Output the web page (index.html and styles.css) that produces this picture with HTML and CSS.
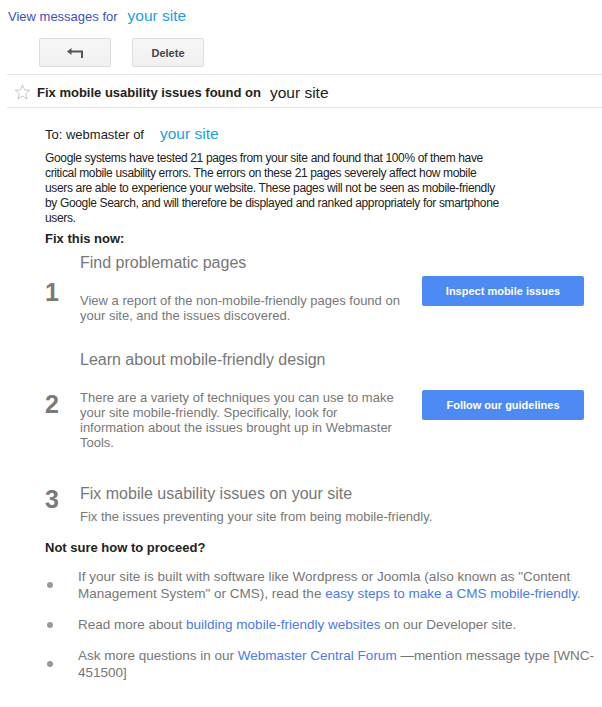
FILE: index.html
```html
<!DOCTYPE html>
<html>
<head>
<meta charset="utf-8">
<link rel="stylesheet" href="styles.css">
</head>
<body>
<div class="topbar">
  <a class="view-link" href="#">View messages for</a>
  <span class="site">your site</span>
</div>
<div class="toolbar">
  <button class="tbtn" aria-label="Back">
    <svg width="16" height="10" viewBox="0 0 16 10"><path d="M0 3.5 L4.5 0 V2.5 H16 V10 H14 V4.5 H4.5 V7 Z" fill="#555"/></svg>
  </button>
  <button class="tbtn">Delete</button>
</div>
<div class="subject">
  <svg class="star" width="17" height="16" viewBox="0 0 17 16"><path d="M8.5 0.8 L10.5 6 L16 6.2 L11.7 9.6 L13.2 15 L8.5 11.9 L3.8 15 L5.3 9.6 L1 6.2 L6.5 6 Z" fill="none" stroke="#c8c8c8" stroke-width="1"/></svg>
  <span class="subj-text">Fix mobile usability issues found on</span>
  <span class="subj-site">your site</span>
</div>
<div class="message">
  <div class="to"><span>To: webmaster of</span><span class="site">your site</span></div>
  <p class="intro">Google systems have tested 21 pages from your site and found that 100% of them have critical mobile usability errors. The errors on these 21 pages severely affect how mobile users are able to experience your website. These pages will not be seen as mobile-friendly by Google Search, and will therefore be displayed and ranked appropriately for smartphone users.</p>
  <h3 class="section">Fix this now:</h3>

  <div class="step">
    <div class="step-num">1</div>
    <div class="step-main">
      <div class="step-title">Find problematic pages</div>
      <div class="step-desc desc-wide">View a report of the non-mobile-friendly pages found on your site, and the issues discovered.</div>
    </div>
    <div class="step-action step-action-first"><a class="btn" href="#">Inspect mobile issues</a></div>
  </div>

  <div class="step">
    <div class="step-num">2</div>
    <div class="step-main">
      <div class="step-title">Learn about mobile-friendly design</div>
      <div class="step-desc desc-narrow">There are a variety of techniques you can use to make your site mobile-friendly. Specifically, look for information about the issues brought up in Webmaster Tools.</div>
    </div>
    <div class="step-action"><a class="btn" href="#">Follow our guidelines</a></div>
  </div>

  <div class="step step-last">
    <div class="step-num">3</div>
    <div class="step-main">
      <div class="step-title">Fix mobile usability issues on your site</div>
      <div class="step-desc">Fix the issues preventing your site from being mobile-friendly.</div>
    </div>
  </div>

  <h3 class="section section-2">Not sure how to proceed?</h3>
  <ul class="help">
    <li>If your site is built with software like Wordpress or Joomla (also known as "Content Management System" or CMS), read the <a href="#">easy steps to make a CMS mobile-friendly</a>.</li>
    <li>Read more about <a href="#">building mobile-friendly websites</a> on our Developer site.</li>
    <li>Ask more questions in our <a href="#">Webmaster Central Forum</a> —mention message type [WNC-<wbr>451500]</li>
  </ul>
</div>
</body>
</html>
```
FILE: styles.css
```css
html, body {
  margin: 0;
  padding: 0;
  background: #fff;
}
body {
  font-family: "Liberation Sans", Arial, sans-serif;
  font-size: 13px;
  color: #222;
}
a { text-decoration: none; }

.topbar {
  height: 30px;
  padding-left: 8px;
  display: flex;
  align-items: center;
  gap: 10px;
  padding-top: 2px;
  box-sizing: border-box;
}
.view-link {
  color: #3d4fc6;
  font-size: 13px;
}
.site {
  color: #1c9fe0;
  font-size: 15.5px;
}

.toolbar {
  display: flex;
  gap: 21px;
  padding: 8px 0 0 39px;
  height: 36px;
  box-sizing: border-box;
  margin-bottom: 8px;
}
.tbtn {
  width: 72px;
  height: 29px;
  border: 1px solid #dcdcdc;
  border-radius: 2px;
  background: linear-gradient(#f6f6f6, #f1f1f1);
  font-family: inherit;
  font-size: 11px;
  font-weight: bold;
  color: #444;
  padding: 0;
  display: flex;
  align-items: center;
  justify-content: center;
}

.subject {
  margin-left: 7px;
  border-top: 1px solid #e5e5e5;
  border-bottom: 1px solid #e5e5e5;
  height: 29px;
  padding-top: 3px;
  margin-top: 2px;
  display: flex;
  align-items: center;
  padding-left: 7px;
  box-sizing: content-box;
}
.star { margin-right: 6px; margin-top: -2px; }
.subj-text {
  font-weight: bold;
  color: #222;
  font-size: 13px;
}
.subj-site {
  font-size: 15.5px;
  color: #222;
  margin-left: 9px;
}

.message {
  padding: 16px 18px 20px 45px;
}
.to {
  display: flex;
  align-items: center;
  gap: 16px;
  height: 20px;
  margin-bottom: 7px;
}
.intro {
  margin: 0;
  max-width: 455px;
  font-size: 12px;
  letter-spacing: -0.35px;
  line-height: 15px;
}
.section {
  margin: 5px 0 0 0;
  font-size: 13px;
  font-weight: bold;
  color: #222;
  line-height: 16px;
}

.step {
  display: flex;
  align-items: center;
  margin-top: 6px;
  padding-bottom: 21px;
}
.step-num {
  width: 35px;
  flex: none;
  font-size: 25px;
  font-weight: bold;
  color: #7a7a7a;
  padding-top: 9px;
}
.step-main {
  flex: 1;
  color: #777;
}
.step-title {
  font-size: 16px;
  line-height: 20px;
}
.step-desc {
  margin-top: 20px;
  font-size: 13px;
  line-height: 15px;
}
.desc-wide { max-width: 335px; }
.desc-narrow { max-width: 320px; }
.step-action {
  flex: none;
  padding-top: 9px;
}
.step-action-first {
  padding-top: 5px;
}
.btn {
  display: flex;
  align-items: center;
  justify-content: center;
  width: 162px;
  height: 30px;
  background: #4d8af4;
  border-radius: 2px;
  color: #fff;
  font-size: 11px;
  font-weight: bold;
}
.step-last {
  padding-bottom: 0;
  margin-top: 13px;
}
.step-last .step-num {
  padding-top: 0;
  padding-bottom: 10px;
}
.step-last .step-desc {
  margin-top: 5px;
}

.section-2 {
  margin-top: 16px;
}
.help {
  list-style: none;
  margin: 12px -10px 0 0;
  padding: 0;
  color: #777;
  font-size: 13.5px;
  line-height: 17px;
}
.help li {
  position: relative;
  padding-left: 33px;
  margin-bottom: 14px;
}
.help li::before {
  content: "";
  position: absolute;
  left: 2px;
  top: 50%;
  width: 6px;
  height: 6px;
  margin-top: -3px;
  border-radius: 50%;
  background: #999;
}
.help a {
  color: #4a79f0;
}
```
